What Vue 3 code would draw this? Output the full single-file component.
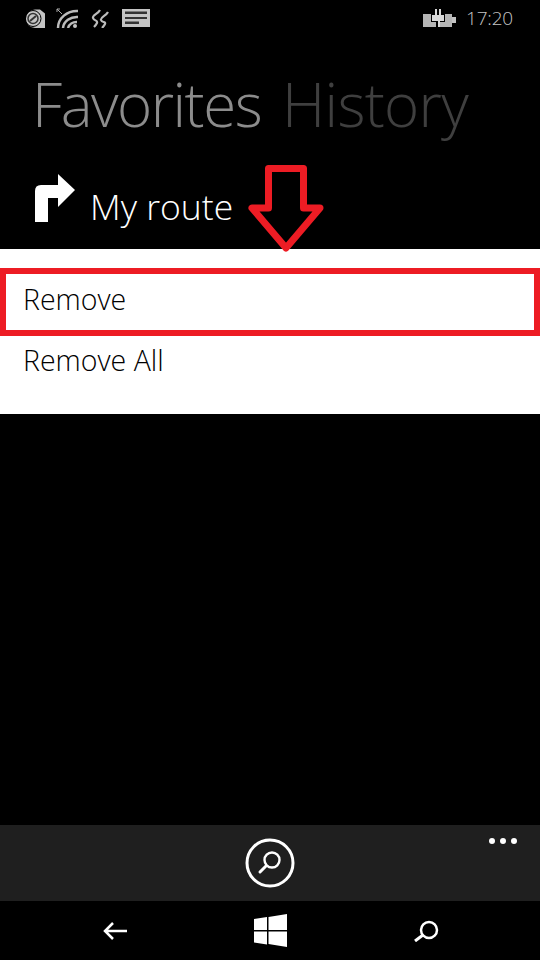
<template>
  <div class="phone">
    <div class="status">
      <div class="status-left">
        <svg width="20" height="19" viewBox="0 0 20 19">
          <path d="M1 9.500a9 9 0 0 1 9-9h5l5 4v14.500h-10a9 9 0 0 1-9-9.500z" fill="#c4c4c4" />
          <circle cx="8" cy="9.500" r="8" fill="none" stroke="#000" stroke-width="1" />
          <circle cx="8" cy="9.500" r="5" fill="none" stroke="#333" stroke-width="1.500" />
          <path d="M5 12l6-5" stroke="#333" stroke-width="2" />
        </svg>
        <svg width="22" height="20" viewBox="0 0 22 20">
          <path d="M1 1l5 5M1 1v3M1 1h3" stroke="#aaa" stroke-width="1" fill="none" />
          <g fill="none" stroke="#bbb" stroke-width="2.500">
            <path d="M2 20a19 17 0 0 1 20-17" />
            <path d="M7 20a14 12 0 0 1 15-11" />
            <path d="M12 20a9 8 0 0 1 9-6" />
          </g>
          <circle cx="19" cy="18" r="2" fill="#c4c4c4" />
        </svg>
        <svg width="18" height="19" viewBox="0 0 18 19" class="wave">
          <g fill="none" stroke="#bbb" stroke-width="2.200">
            <path d="M9 1C7 5 1 6 2 9s5 2 4 5c-1 2-2 3-3 4" />
            <path d="M17 3c-2 4-8 5-7 8s5 1 4 4c-1 2-2 3-3 4" />
          </g>
        </svg>
        <svg width="28" height="18" viewBox="0 0 28 18" class="msg">
          <rect width="28" height="18" fill="#c4c4c4" />
          <path d="M3 2.500h22v2.500H3zM3 8h22v2H3zM3 12.500h14v2.500H3z" fill="#333" />
        </svg>
      </div>
      <div class="status-right">
        <svg width="33" height="18" viewBox="0 0 33 18" class="battery">
          <path d="M0 5h29v13H0z" fill="#b5b5b5" />
          <path d="M29 8h4v6h-4z" fill="#c4c4c4" />
          <path d="M8 3h14v10h-5v5h-4v-5H8z" fill="#000" />
          <path d="M12 0h2v6h2V0h2v6h3v6h-4v6h-2v-6H9V6h3z" fill="#d8d8d8" />
        </svg>
        <span class="clock">17:20</span>
      </div>
    </div>

    <div class="tabs">
      <span class="tab-active">Favorites</span>
      <span class="tab-dim">History</span>
    </div>

    <div class="route">
      <svg width="40" height="48" viewBox="0 0 40 48" class="turn">
        <path d="M0 48V17q0-6 6-6h17V0l17 16-17 17V24H13v24z" fill="#fff" />
      </svg>
      <span class="route-name">My route</span>
    </div>

    <div class="menu">
      <div class="item picked"><span>Remove</span></div>
      <div class="item"><span>Remove All</span></div>
    </div>

    <svg class="pointer" width="76" height="88" viewBox="0 0 76 88">
      <path d="M20.500 4.500h35V44H72L38 84 4 44h16.500z" fill="none" stroke="#ed1c24" stroke-width="7" stroke-linejoin="round" />
    </svg>

    <div class="spacer"></div>

    <div class="appbar">
      <svg width="50" height="50" viewBox="0 0 50 50" class="search-btn">
        <circle cx="25" cy="25" r="23" fill="none" stroke="#fff" stroke-width="3" />
        <circle cx="27" cy="22" r="7.500" fill="none" stroke="#fff" stroke-width="2.400" />
        <path d="M21 28l-6 6" stroke="#fff" stroke-width="3" stroke-linecap="round" />
      </svg>
      <div class="dots"><i></i><i></i><i></i></div>
    </div>

    <div class="navbar">
      <svg width="26" height="20" viewBox="0 0 26 20">
        <path d="M25 10H3M11 2l-8 8 8 8" fill="none" stroke="#fff" stroke-width="2.500" />
      </svg>
      <svg width="33" height="33" viewBox="0 0 33 33">
        <path d="M0 5l13-2v13H0zM14.500 3L33 0v16H14.500zM0 17.500h13v13l-13-2zM14.500 17.500H33V33l-18.500-3z" fill="#fff" />
      </svg>
      <svg width="26" height="22" viewBox="0 0 26 22">
        <circle cx="16" cy="10" r="8" fill="none" stroke="#fff" stroke-width="2.500" />
        <path d="M10 15l-8 6" stroke="#fff" stroke-width="3" />
      </svg>
    </div>
  </div>
</template>

<script setup>
</script>

<style scoped>
.phone {
  position: relative;
  display: flex;
  flex-direction: column;
  width: 540px;
  height: 960px;
  background: #000;
  color: #fff;
  font-family: "Open Sans", "Noto Sans", sans-serif;
  overflow: hidden;
}
.status {
  display: flex;
  justify-content: space-between;
  align-items: center;
  height: 36px;
  padding: 0 27px 0 25px;
  box-sizing: border-box;
  flex: none;
}
.status-left,
.status-right {
  display: flex;
  align-items: center;
}
.status-left {
  gap: 11px;
}
.wave {
  margin-left: 2px;
}
.msg {
  margin-left: 2px;
}
.status-right {
  gap: 10px;
}
.clock {
  font-size: 19px;
  font-weight: 300;
  letter-spacing: -0.2px;
  color: #c4c4c4;
}
.tabs {
  display: flex;
  gap: 21px;
  height: 107px;
  padding: 26px 0 0 32px;
  box-sizing: border-box;
  font-size: 60px;
  font-weight: 300;
  line-height: 84px;
  white-space: nowrap;
  flex: none;
}
.tab-active {
  color: #8c8c8c;
  letter-spacing: -1.5px;
}
.tab-dim {
  color: #3f3f3f;
  letter-spacing: -0.7px;
}
.route {
  display: flex;
  align-items: center;
  gap: 15px;
  height: 106px;
  padding: 0 0 0 35px;
  box-sizing: border-box;
  font-size: 35.5px;
  flex: none;
}
.turn {
  margin-top: 3px;
}
.route-name {
  padding-top: 20px;
  font-weight: 300;
}
.menu {
  display: flex;
  flex-direction: column;
  height: 165px;
  padding-top: 19px;
  box-sizing: border-box;
  background: #fff;
  color: #000;
  font-size: 28.5px;
  font-weight: 300;
  flex: none;
}
.item {
  display: flex;
  align-items: center;
  height: 48px;
  padding-left: 23px;
}
.picked {
  height: 68px;
  padding-left: 17px;
  padding-bottom: 7px;
  border: 6px solid #ed1c24;
  box-sizing: border-box;
}
.pointer {
  position: absolute;
  left: 248px;
  top: 164px;
}
.spacer {
  flex: 1;
}
.appbar {
  position: relative;
  display: flex;
  justify-content: center;
  align-items: center;
  height: 76px;
  background: #1f1f1f;
  flex: none;
}
.search-btn {
  margin-right: 1px;
}
.dots {
  position: absolute;
  right: 23px;
  top: 13px;
  display: flex;
  gap: 5px;
}
.dots i {
  width: 6px;
  height: 6px;
  border-radius: 50%;
  background: #fff;
}
.navbar {
  display: flex;
  align-items: center;
  gap: 126px;
  height: 59px;
  padding-left: 102px;
  flex: none;
}
</style>

<style>
body {
  background: #000;
}
</style>
